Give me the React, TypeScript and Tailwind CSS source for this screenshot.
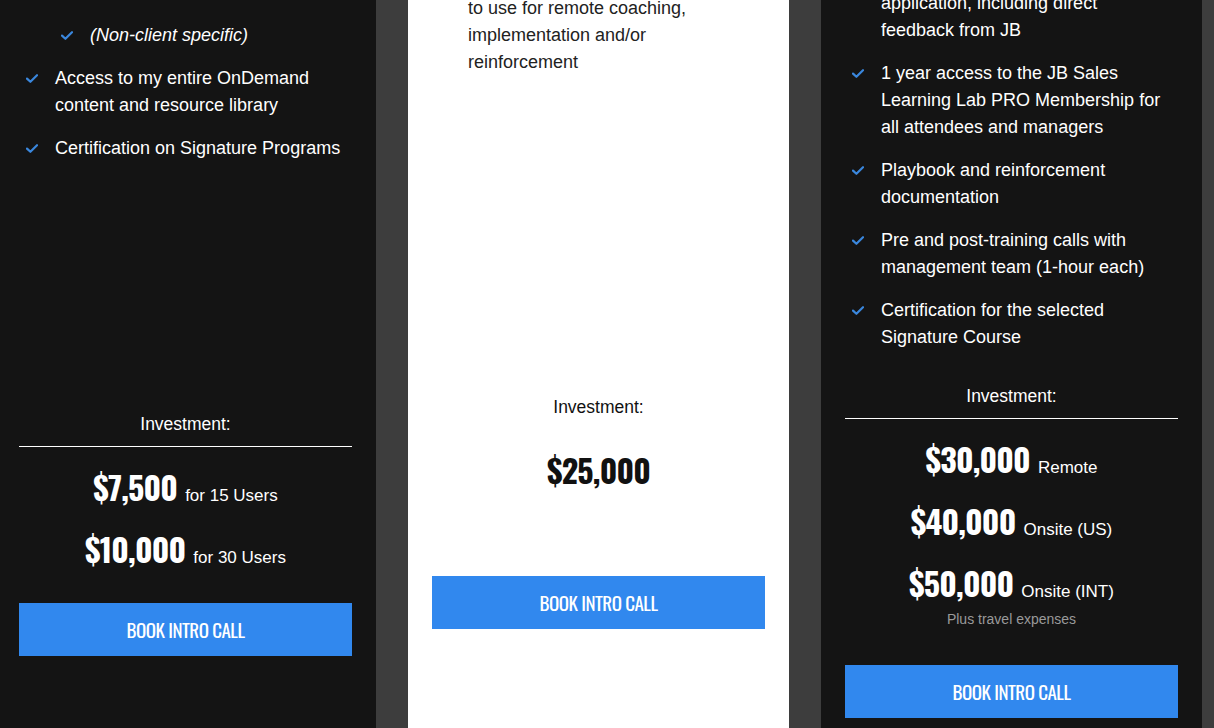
import React from "react";

const body = { fontFamily: "'Liberation Sans', Arial, sans-serif" };
const condensed = {
  fontFamily: "'Oswald', 'Roboto Condensed', 'Liberation Sans Narrow', 'DejaVu Sans Condensed', sans-serif",
};

type Item = { lines: string[]; italic?: boolean; nested?: boolean };

function Check() {
  return (
    <svg width="12" height="9" viewBox="0 0 12 9" fill="none">
      <path d="M1 4.6 L4.4 7.8 L11 1.2" stroke="#3a87dd" strokeWidth="2.2" strokeLinecap="round" strokeLinejoin="round" />
    </svg>
  );
}

function Feature({ item, dark }: { item: Item; dark: boolean }) {
  return (
    <li className={`flex ${item.nested ? "pl-[35px]" : ""}`}>
      <div className="w-[36px] shrink-0 pl-[7px] h-[27px] flex items-center">
        <Check />
      </div>
      <div className={`${item.italic ? "italic" : ""} ${dark ? "text-white" : "text-[#222]"}`}>
        {item.lines.map((l, i) => (
          <div key={i} className="h-[27px] leading-[27px] whitespace-nowrap">
            {l}
          </div>
        ))}
      </div>
    </li>
  );
}

function BookButton({ className = "" }: { className?: string }) {
  return (
    <button className={`h-[53px] w-full bg-[#3188ee] flex items-center justify-center ${className}`}>
      <span style={condensed} className="text-white text-[19px] tracking-[-0.5px] uppercase -mt-px">
        Book Intro Call
      </span>
    </button>
  );
}

function Price({ amount, label, dark = true, className = "" }: { amount: string; label?: string; dark?: boolean; className?: string }) {
  return (
    <div className={`h-[46px] flex items-baseline justify-center gap-[8px] ${className}`}>
      <span style={condensed} className={`text-[32px] leading-[46px] font-bold tracking-[-0.8px] ${dark ? "text-white" : "text-[#111]"}`}>
        {amount}
      </span>
      {label && <span className="text-[17px] text-white">{label}</span>}
    </div>
  );
}

const leftItems: Item[] = [
  { lines: ["(Non-client specific)"], italic: true, nested: true },
  { lines: ["Access to my entire OnDemand", "content and resource library"] },
  { lines: ["Certification on Signature Programs"] },
];

const rightItems: Item[] = [
  { lines: ["Live role-play and real-world", "application, including direct", "feedback from JB"] },
  { lines: ["1 year access to the JB Sales", "Learning Lab PRO Membership for", "all attendees and managers"] },
  { lines: ["Playbook and reinforcement", "documentation"] },
  { lines: ["Pre and post-training calls with", "management team (1-hour each)"] },
  { lines: ["Certification for the selected", "Signature Course"] },
];

export default function App() {
  return (
    <div style={body} className="w-[1214px] h-[728px] overflow-hidden bg-[#3d3d3d] flex gap-8 text-[18px]">
      {/* Left card */}
      <div className="w-[376px] shrink-0 bg-[#141414] pl-[19px] pr-[24px] flex flex-col">
        <ul className="mt-[22px] flex flex-col gap-4">
          {leftItems.map((it, i) => (
            <Feature key={i} item={it} dark />
          ))}
        </ul>
        <div className="mt-[249px] h-[27px] leading-[27px] text-center text-white text-[17.5px]">Investment:</div>
        <div className="mt-[8px] h-px bg-white" />
        <Price amount="$7,500" label="for 15 Users" className="mt-[17px]" />
        <Price amount="$10,000" label="for 30 Users" className="mt-4" />
        <BookButton className="mt-[31px]" />
      </div>

      {/* Middle card */}
      <div className="w-[381px] shrink-0 bg-white px-6 flex flex-col">
        <div className="mt-[-32px] pl-[36px] text-[#222]">
          {["Two additional hours of JB's time", "to use for remote coaching,", "implementation and/or", "reinforcement"].map((l, i) => (
            <div key={i} className="h-[27px] leading-[27px] whitespace-nowrap">
              {l}
            </div>
          ))}
        </div>
        <div className="mt-[318px] h-[27px] leading-[27px] text-center text-[#111] text-[17.5px]">Investment:</div>
        <Price amount="$25,000" dark={false} className="mt-[26px]" />
        <BookButton className="mt-[83px]" />
      </div>

      {/* Right card */}
      <div className="w-[381px] shrink-0 bg-[#141414] px-6 flex flex-col">
        <ul className="mt-[-37px] flex flex-col gap-4">
          {rightItems.map((it, i) => (
            <Feature key={i} item={it} dark />
          ))}
        </ul>
        <div className="mt-[32px] h-[27px] leading-[27px] text-center text-white text-[17.5px]">Investment:</div>
        <div className="mt-[8px] h-px bg-white" />
        <Price amount="$30,000" label="Remote" className="mt-[17px]" />
        <Price amount="$40,000" label="Onsite (US)" className="mt-4" />
        <Price amount="$50,000" label="Onsite (INT)" className="mt-4" />
        <div className="mt-[3px] h-[20px] leading-[20px] text-center text-[14px] text-[#9a9a9a]">Plus travel expenses</div>
        <BookButton className="mt-[36px]" />
      </div>
    </div>
  );
}
